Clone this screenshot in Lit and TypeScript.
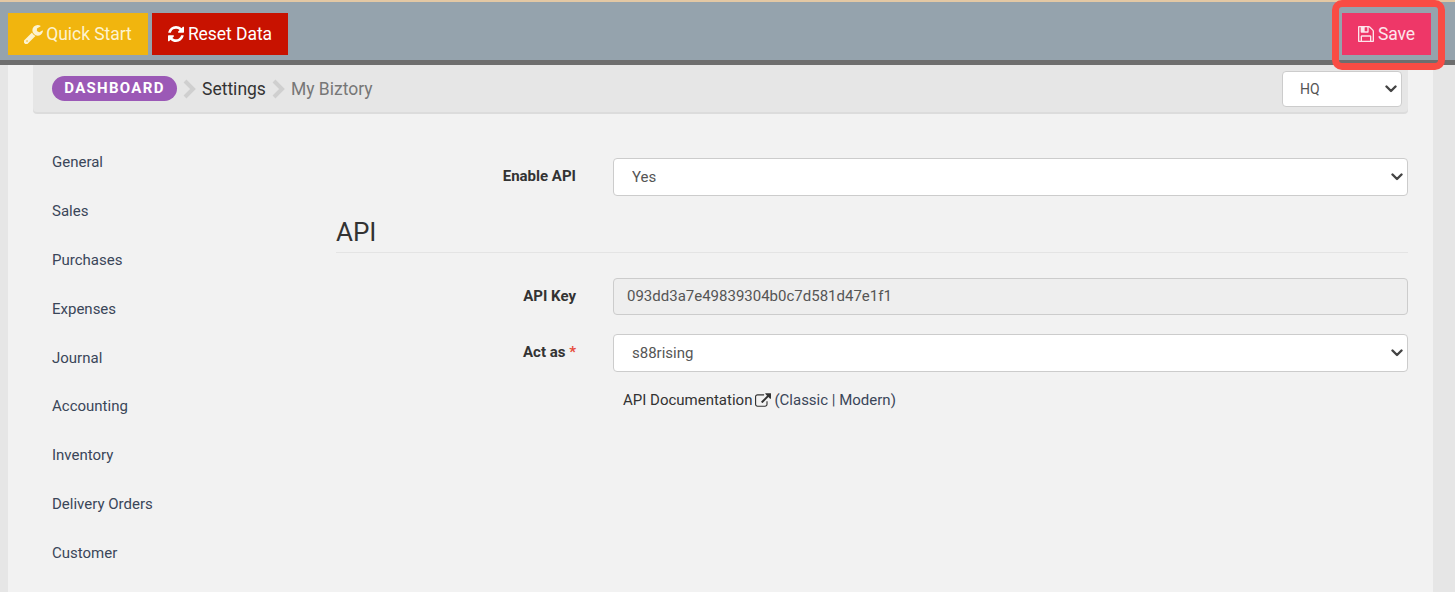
import { LitElement, html, css } from "lit";
import { customElement } from "lit/decorators.js";

const menu = ["General","Sales","Purchases","Expenses","Journal","Accounting","Inventory","Delivery Orders","Customer"];

@customElement("app-root")
export class AppRoot extends LitElement {
  static styles = css`
    :host { display:block; height:592px; overflow:hidden; background:#e6e6e6; font-family:Roboto,sans-serif; color:#333; position:relative; }
    .stripe { height:2px; background:#e3c8a4; }
    .top { background:#95a3ad; border-bottom:5px solid #6e6e6e; display:flex; align-items:flex-start; padding:11px 24px 0 8px; box-sizing:border-box; height:63px; gap:4px; }
    .btn { height:42px; display:flex; align-items:center; justify-content:center; color:#fff; font-size:17.5px; gap:3px; letter-spacing:-.05px; }
    .btn svg { fill:currentColor; }
    .quick { width:140px; background:#f1b50e; color:#fdf3d0; }
    .reset { width:136px; background:#c81200; gap:4px; }
    .save { width:89px; background:#ee3768; margin-left:auto; gap:4px; color:#fde6ec; }
    .hl { position:absolute; left:1332px; top:0; width:113px; height:70px; border:7px solid #f94c44; border-radius:10px; box-sizing:border-box; }
    .page { margin-left:8px; margin-right:22px; background:#f2f2f2; height:527px; }
    .crumb { margin-left:25px; width:1375px; height:47px; background:#e6e6e6; border-radius:0 0 4px 4px; box-shadow:0 2px 0 #dcdcdc; display:flex; align-items:center; padding:0 6px 0 19px; box-sizing:border-box; }
    .pill { background:#9b59b6; color:#fff; font-weight:700; font-size:15px; letter-spacing:1.3px; height:25px; line-height:25px; width:125px; text-align:center; border-radius:13px; }
    .sep { width:14px; height:20px; margin:0 5px 0 6px; }
    .sep path { fill:none; stroke:#cfcfcf; stroke-width:4; }
    .c1 { font-size:17.5px; color:#333; }
    .c2 { font-size:17.5px; color:#777; }
    .sel { position:relative; display:block; }
    .crumb .sel { margin-left:auto; width:120px; margin-top:1px; }
    .sel svg { position:absolute; right:5px; top:50%; margin-top:-4px; width:12px; height:8px; fill:none; stroke:#444; stroke-width:2.4; stroke-linecap:round; stroke-linejoin:round; pointer-events:none; }
    select { appearance:none; display:block; width:100%; height:38px; padding-left:18px; font-family:Roboto,sans-serif; background:#fff; border:1px solid #ccc; border-radius:4px; color:#555; font-size:15px; box-sizing:border-box; }
    .crumb select { height:36px; font-size:14px; padding-left:17px; }
    .body { display:flex; }
    .side { width:299px; padding:26px 0 0 44px; box-sizing:border-box; display:flex; flex-direction:column; }
    .side a { height:48.9px; line-height:49px; font-size:15px; color:#3a4659; }
    .main { width:1072px; padding-top:46px; margin-left:29px; }
    .row { display:grid; grid-template-columns:240px 795px; column-gap:37px; align-items:center; }
    .row label { text-align:right; font-weight:700; font-size:15px; color:#333; padding-bottom:2px; }
    .req { color:#e74c3c; }
    .input { height:37px; background:#eee; border:1px solid #ccc; border-radius:4px; box-sizing:border-box; line-height:35px; padding-left:13px; font-size:15px; color:#555; }
    h2 { font-weight:400; font-size:26px; color:#333; margin:17px 0 25px; padding-bottom:1px; border-bottom:1px solid #e4e4e4; line-height:38px; width:1072px; }
    .mt { margin-top:19px; }
    .doc { margin:19px 0 0 287px; font-size:15px; color:#333; display:flex; align-items:center; gap:3px; }
    .doc a { color:#3a4659; }
  `;
  render() {
    const sep = html`<svg class="sep" viewBox="0 0 14 20"><path d="M2 2l8 8-8 8"/></svg>`;
    const chev = html`<svg viewBox="0 0 12 8"><path d="M1.500 1.500L6 6l4.500-4.500"/></svg>`;
    return html`
      <div class="stripe"></div>
      <div class="top">
        <div class="btn quick"><svg width="19" height="19" viewBox="128 128 1600 1600"><path d="M448 1472q0-26-19-45t-45-19-45 19-19 45 19 45 45 19 45-19 19-45zm644-420l-682 682q-37 37-90 37-52 0-91-37l-106-108q-38-36-38-90 0-53 38-91l681-681q39 98 114.500 173.500t173.500 114.500zm634-435q0 39-23 106-47 134-164.500 217.500t-258.500 83.500q-185 0-316.500-131.500t-131.500-316.500 131.500-316.500 316.500-131.500q58 0 121.500 16.500t107.500 46.500q16 11 16 28t-16 28l-293 169v224l193 107q5-3 79-48.500t135.500-81 70.500-35.500q15 0 23.500 10t8.500 25z"/></svg>Quick Start</div>
        <div class="btn reset"><svg width="16" height="16" viewBox="0 128 1536 1536"><path d="M1511 1056q0 5-1 7-64 268-268 434.500t-478 166.500q-146 0-282.500-55t-243.500-157l-129 129q-19 19-45 19t-45-19-19-45v-448q0-26 19-45t45-19h448q26 0 45 19t19 45-19 45l-137 137q71 66 161 102t187 36q134 0 250-65t186-179q11-17 53-117 8-23 30-23h192q13 0 22.500 9.500t9.500 22.500zm25-800v448q0 26-19 45t-45 19h-448q-26 0-45-19t-19-45 19-45l138-138q-148-137-349-137-134 0-250 65t-186 179q-11 17-53 117-8 23-30 23h-199q-13 0-22.500-9.500t-9.500-22.500v-7q65-268 270-434.500t480-166.500q146 0 284 55.500t245 156.500l130-129q19-19 45-19t45 19 19 45z"/></svg>Reset Data</div>
        <div class="btn save"><svg width="16" height="16" viewBox="0 0 1536 1536"><path d="M384 1408h768v-384h-768v384zm896 0h128v-896q0-14-10-38.500t-20-34.500l-281-281q-10-10-34-20t-39-10v416q0 40-28 68t-68 28h-576q-40 0-68-28t-28-68v-416h-128v1280h128v-416q0-40 28-68t68-28h832q40 0 68 28t28 68v416zm-384-928v-320q0-13-9.500-22.500t-22.500-9.500h-192q-13 0-22.500 9.500t-9.500 22.500v320q0 13 9.500 22.500t22.500 9.500h192q13 0 22.500-9.500t9.500-22.500zm640 32v928q0 40-28 68t-68 28h-1344q-40 0-68-28t-28-68v-1344q0-40 28-68t68-28h928q40 0 88 20t76 48l280 280q28 28 48 76t20 88z"/></svg>Save</div>
      </div>
      <div class="hl"></div>
      <div class="page">
        <div class="crumb">
          <span class="pill">DASHBOARD</span>${sep}<span class="c1">Settings</span>${sep}<span class="c2">My Biztory</span>
          <div class="sel"><select><option>HQ</option></select>${chev}</div>
        </div>
        <div class="body">
          <nav class="side">${menu.map(m => html`<a>${m}</a>`)}</nav>
          <div class="main">
            <div class="row"><label>Enable API</label><div class="sel"><select><option>Yes</option></select>${chev}</div></div>
            <h2>API</h2>
            <div class="row"><label>API Key</label><div class="input">093dd3a7e49839304b0c7d581d47e1f1</div></div>
            <div class="row mt"><label>Act as <span class="req">*</span></label><div class="sel"><select><option>s88rising</option></select>${chev}</div></div>
            <div class="doc">API Documentation <svg width="16" height="14" viewBox="0 0 1792 1536"><path fill="#333" d="M1408 800v320q0 119-84.500 203.500t-203.500 84.500h-832q-119 0-203.500-84.500t-84.500-203.500v-832q0-119 84.500-203.500t203.500-84.500h704q14 0 23 9t9 23v64q0 14-9 23t-23 9h-704q-66 0-113 47t-47 113v832q0 66 47 113t113 47h832q66 0 113-47t47-113v-320q0-14 9-23t23-9h64q14 0 23 9t9 23zm384-864v512q0 26-19 45t-45 19-45-19l-176-176-652 652q-10 10-23 10t-23-10l-114-114q-10-10-10-23t10-23l652-652-176-176q-19-19-19-45t19-45 45-19h512q26 0 45 19t19 45z" transform="translate(0 128)"/></svg> <a>(Classic | Modern)</a></div>
          </div>
        </div>
      </div>
    `;
  }
}
